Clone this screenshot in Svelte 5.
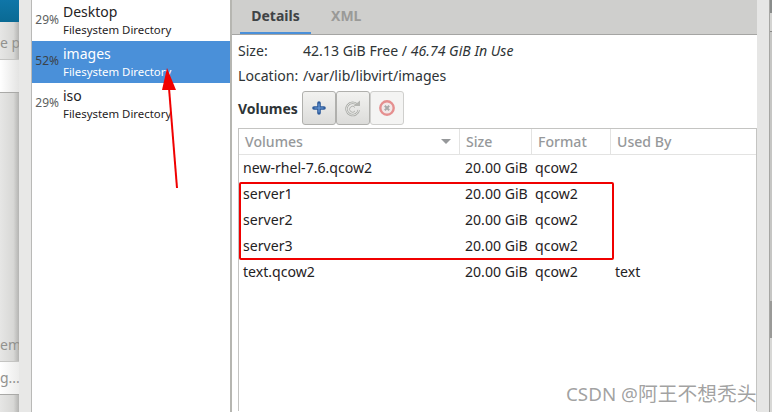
<script>
  const pools = [
    { pct: '29%', name: 'Desktop', active: false },
    { pct: '52%', name: 'images', active: true },
    { pct: '29%', name: 'iso', active: false }
  ];
  const vols = [
    { n: 'new-rhel-7.6.qcow2', u: '' },
    { n: 'server1', u: '' },
    { n: 'server2', u: '' },
    { n: 'server3', u: '' },
    { n: 'text.qcow2', u: 'text' }
  ];
</script>

<div class="screen">
  <div class="behind">
    <div class="teal"></div>
    <div class="entry"><span>e p</span></div>
    <div class="field"></div>
    <div class="grow"></div>
    <div class="low"><span>em</span></div>
    <div class="field2"><span>g...</span></div>
    <div class="foot"></div>
  </div>
  <div class="gutter"></div>
  <div class="pools">
    {#each pools as p}
      <div class="pool" class:active={p.active}>
        <span class="pct">{p.pct}</span>
        <div class="names">
          <div class="pname">{p.name}</div>
          <div class="ptype">Filesystem Directory</div>
        </div>
      </div>
    {/each}
  </div>
  <div class="main">
    <div class="tabs">
      <div class="tab on">Details</div>
      <div class="tab">XML</div>
    </div>
    <div class="body">
      <div class="info"><span class="lab">Size:</span><span><span>42.13 GiB Free</span> / <i>46.74 GiB In Use</i></span></div>
      <div class="info loc"><span class="lab">Location:</span><span>/var/lib/libvirt/images</span></div>
      <div class="volbar">
        <b>Volumes</b>
        <div class="btns">
          <div class="btn">
            <svg width="14" height="14" viewBox="0 0 14 14"><path d="M7 2v10M2 7h10" stroke="#2c5a9a" stroke-width="3.600" stroke-linecap="round" fill="none"/><path d="M7 2.500v9M2.500 7h9" stroke="#6a9bd8" stroke-width="1.200" fill="none"/></svg>
          </div>
          <div class="btn">
            <svg width="18" height="18" viewBox="0 0 18 18"><path d="M13.500 6A6.200 6.200 0 1 0 14.800 11" stroke="#a8aaa6" stroke-width="2.400" fill="none"/><path d="M13.500 6A6.200 6.200 0 1 0 14.800 11" stroke="#f2f2f0" stroke-width="0.800" fill="none"/><path d="M9.500 7h6.500V1.500z" fill="#b4b5b1"/><path d="M11 8.500A3 3 0 1 0 11 12" stroke="#b4b5b1" stroke-width="1" fill="none"/></svg>
          </div>
          <div class="btn off">
            <svg width="18" height="18" viewBox="0 0 18 18"><circle cx="9" cy="9" r="6.700" fill="#f2e8e8" stroke="#e58f8f" stroke-width="2.400"/><path d="M6.800 6.800l4.400 4.400M11.200 6.800l-4.400 4.400" stroke="#a9a9a9" stroke-width="2"/></svg>
          </div>
        </div>
      </div>
      <div class="table">
        <div class="row head">
          <div class="c c1"><span>Volumes</span><i class="caret"></i></div>
          <div class="c c2">Size</div>
          <div class="c c3">Format</div>
          <div class="c c4">Used By</div>
        </div>
        {#each vols as v}
          <div class="row">
            <div class="c c1">{v.n}</div>
            <div class="c c2">20.00 GiB</div>
            <div class="c c3">qcow2</div>
            <div class="c c4">{v.u}</div>
          </div>
        {/each}
      </div>
    </div>
  </div>
  <div class="edge"><div class="rail"></div></div>

  <div class="redbox"></div>
  <svg class="arrow" width="40" height="130" viewBox="0 0 40 130">
    <path d="M27 128L19 28" stroke="#f00000" stroke-width="2" fill="none"/>
    <path d="M17 8L12 30L26 30Z" fill="#f00000"/>
  </svg>
  <div class="mark">CSDN @<span class="cjk">阿王不想秃头</span></div>
</div>

<style>
  :global(body) { margin: 0; }
  .screen {
    position: relative;
    width: 772px;
    height: 412px;
    overflow: hidden;
    display: flex;
    font-family: "Noto Sans", "Open Sans", sans-serif;
    font-size: 14px;
    color: #2e3436;
    background: #fff;
  }
  .behind {
    width: 19px;
    flex: none;
    display: flex;
    flex-direction: column;
    background: linear-gradient(90deg, #e6e6e5, #d8d8d6 70%, #b4b4b2);
    color: #92928f;
    white-space: nowrap;
    overflow: hidden;
  }
  .teal { height: 22px; flex: none; background: linear-gradient(180deg, #0f76a8, #0a6a94); }
  .entry { height: 38px; flex: none; border-bottom: 1px solid #c4c4c2; line-height: 22px; padding-top: 10px; box-sizing: border-box; }
  .field { height: 33px; flex: none; box-sizing: border-box; border-bottom: 1px solid #a9a9a7; background: linear-gradient(90deg, #fff, #e4e4e3); }
  .grow { flex: 1; }
  .low { height: 29px; flex: none; box-sizing: border-box; border-bottom: 1px solid #c4c4c2; line-height: 18px; padding-top: 3px; }
  .field2 { height: 33px; flex: none; box-sizing: border-box; border-bottom: 1px solid #a9a9a7; background: linear-gradient(90deg, #fff, #ececeb); line-height: 32px; }
  .foot { height: 17px; flex: none; }
  .gutter { width: 13px; flex: none; box-sizing: border-box; background: #e8e8e7; border-right: 1px solid #b9b9b7; }
  .pools { width: 198px; flex: none; background: #fff; }
  .pool { height: 42px; display: flex; color: #1f2224; }
  .pool:first-child { height: 41px; }
  .pool.active { background: #4a90d9; color: #fff; }
  .pct { width: 27px; flex: none; text-align: right; box-sizing: border-box; font-size: 12px; color: #5c5f60; padding-top: 11px; line-height: 17px; margin-right: 4px; }
  .active .pct { color: #3c4248; }
  .names { white-space: nowrap; }
  .pname { font-size: 14px; line-height: 18px; padding-top: 3px; }
  .active .pname, .pool:last-child .pname { padding-top: 4px; }
  .ptype { font-size: 11.400px; line-height: 16px; padding-top: 1px; }
  .main { width: 527px; flex: none; border-left: 2px solid #b6b6b1; box-sizing: border-box; display: flex; flex-direction: column; }
  .tabs { height: 35px; flex: none; box-sizing: border-box; background: #cfcfcd; border-bottom: 1px solid #a5a5a3; display: flex; padding-left: 8px; }
  .tab { font-weight: 700; color: #9a9a98; text-align: center; line-height: 31px; }
  .tab.on { width: 71px; color: #3f4345; border-bottom: 2px solid #4a90d9; height: 34px; box-sizing: border-box; }
  .tab:not(.on) { margin-left: 20px; }
  .body { padding: 0 0 0 6px; flex: 1; min-height: 0; display: flex; flex-direction: column; }
  .info { flex: none; display: flex; height: 25px; line-height: 25px; padding-top: 3px; color: #2e3436; white-space: nowrap; font-size: 14.100px; }
  .loc { padding-top: 0; }
  .lab { width: 65px; flex: none; }
  .volbar { flex: none; display: flex; align-items: center; height: 34px; margin-top: 3px; }
  .volbar b { width: 64px; flex: none; color: #2e3436; }
  .btns { display: flex; }
  .btn { width: 34px; height: 34px; box-sizing: border-box; border: 1px solid #b0b0ad; border-radius: 3px; display: flex; align-items: center; justify-content: center; background: linear-gradient(180deg, #f2f2f0, #dcdcda); }
  .btn.off { background: #f4f4f3; border-color: #cfcfcd; }
  .table { flex: 1; margin-top: 3px; margin-bottom: 1px; border: 1px solid #c4c4c2; border-width: 1px 1px 0 1px; font-size: 14.100px; }
  .row { display: flex; height: 26px; line-height: 26px; white-space: nowrap; color: #1f2224; }
  .row.head { height: 25px; border-bottom: 1px solid #e3e3e2; color: #96989a; font-weight: 500; }
  .c { box-sizing: border-box; padding-left: 4px; flex: none; }
  .head .c { padding-left: 6px; border-right: 1px solid #e3e3e2; }
  .head .c4 { border-right: 0; }
  .c1 { width: 221px; display: flex; justify-content: space-between; align-items: center; }
  .c2 { width: 72px; padding-left: 5px; }
  .c3 { width: 79px; padding-left: 3px; }
  .c4 { flex: 1; }
  .caret { width: 0; height: 0; border-left: 5px solid transparent; border-right: 5px solid transparent; border-top: 5px solid #96989a; margin-right: 8px; }
  .edge { flex: 1; background: #e6e6e5; display: flex; justify-content: flex-end; }
  .rail { width: 3px; box-sizing: border-box; border-left: 1px solid #a6a6a3; background: linear-gradient(180deg, #8a8d8c 0 13px, #d4d4d2 13px 31px, #8a8a88 31px 32px, #c6c6c4 32px 301px, #9a9a98 301px 338px, #d8d8d6 338px); }
  .redbox { position: absolute; left: 239px; top: 182px; width: 371px; height: 74px; border: 2px solid #f00000; border-radius: 2px; }
  .arrow { position: absolute; left: 150px; top: 60px; }
  .mark { position: absolute; left: 566px; top: 381px; width: 191px; overflow: hidden; font-size: 18.800px; color: rgba(120,120,120,0.7); line-height: 26px; white-space: nowrap; font-family: "Noto Sans", "Noto Sans CJK SC", sans-serif; }
  .cjk { font-size: 19.800px; }
</style>
